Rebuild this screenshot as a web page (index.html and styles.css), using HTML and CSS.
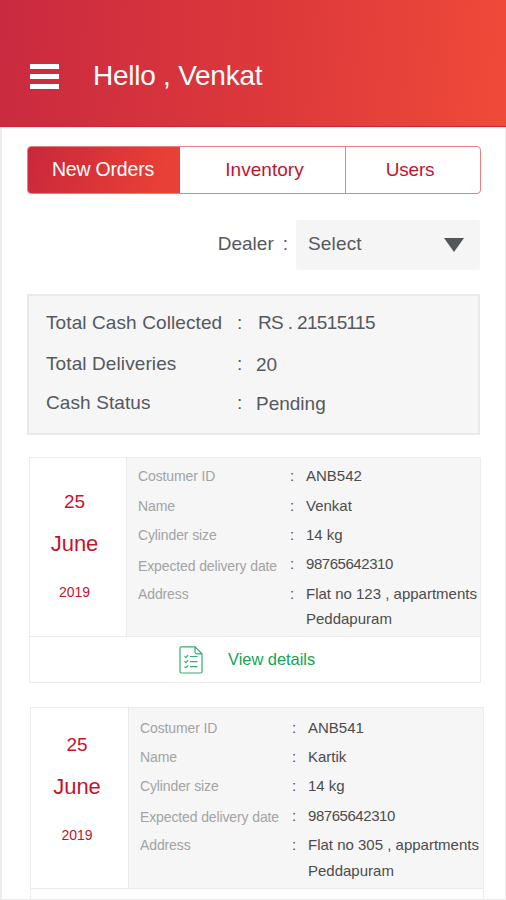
FILE: index.html
```html
<!DOCTYPE html>
<html lang="en">
<head>
<meta charset="utf-8">
<title>Orders</title>
<link rel="stylesheet" href="styles.css">
</head>
<body>
<div class="screen">
  <header class="header">
    <div class="burger"><span></span><span></span><span></span></div>
    <h1>Hello , Venkat</h1>
  </header>
  <main class="content">
    <nav class="tabs">
      <div class="tab active">New Orders</div>
      <div class="tab">Inventory</div>
      <div class="tab users">Users</div>
    </nav>
    <div class="dealer">
      <span class="dealer-label">Dealer</span><span class="dealer-colon">:</span>
      <div class="select"><span>Select</span><svg width="20" height="14" viewBox="0 0 20 14"><path d="M0 0H20L10 14Z" fill="#53565b"/></svg></div>
    </div>
    <section class="summary">
      <div class="sum-row"><span>Total Cash Collected</span><span>:</span><span class="amount">RS . 21515115</span></div>
      <div class="sum-row second"><span>Total Deliveries</span><span>:</span><span class="low">20</span></div>
      <div class="sum-row third"><span>Cash Status</span><span>:</span><span class="low">Pending</span></div>
    </section>
    <article class="card">
      <div class="card-top">
        <div class="date"><span class="day">25</span><span class="month">June</span><span class="year">2019</span></div>
        <dl class="info">
          <dt>Costumer ID</dt><dd class="colon">:</dd><dd>ANB542</dd>
          <dt>Name</dt><dd class="colon">:</dd><dd>Venkat</dd>
          <dt>Cylinder size</dt><dd class="colon">:</dd><dd>14 kg</dd>
          <dt class="expected">Expected delivery date</dt><dd class="colon">:</dd><dd class="digits">98765642310</dd>
          <dt>Address</dt><dd class="colon">:</dd><dd>Flat no 123 , appartments</dd>
          <dd class="city">Peddapuram</dd>
        </dl>
      </div>
      <div class="details">
        <svg width="24" height="28" viewBox="0 0 24 28" fill="none" stroke="#35ad72" stroke-width="1.2">
          <path d="M16 .8H2.5Q1 .8 1 2.3V25.5Q1 27 2.5 27H21.5Q23 27 23 25.5V7.8L16 .8V6.3Q16 7.8 17.5 7.8H23"/>
          <path d="M5.5 10.4l1.4 1.1 2.3-2.4M5.5 15.5l1.4 1.1 2.3-2.4M5.5 20.6l1.4 1.1 2.3-2.4M11 10.5h7.5M11 15.6h7.5M11 20.7h7.5"/>
        </svg>
        <span>View details</span>
      </div>
    </article>
    <article class="card next">
      <div class="card-top">
        <div class="date"><span class="day">25</span><span class="month">June</span><span class="year">2019</span></div>
        <dl class="info">
          <dt>Costumer ID</dt><dd class="colon">:</dd><dd>ANB541</dd>
          <dt>Name</dt><dd class="colon">:</dd><dd>Kartik</dd>
          <dt>Cylinder size</dt><dd class="colon">:</dd><dd>14 kg</dd>
          <dt class="expected">Expected delivery date</dt><dd class="colon">:</dd><dd class="digits">98765642310</dd>
          <dt>Address</dt><dd class="colon">:</dd><dd>Flat no 305 , appartments</dd>
          <dd class="city">Peddapuram</dd>
        </dl>
      </div>
      <div class="details"></div>
    </article>
  </main>
</div>
</body>
</html>
```
FILE: styles.css
```css
* { box-sizing: border-box; }
body { margin: 0; background: #fff; font-family: "Liberation Sans", Arial, sans-serif; color: #55585c; }
.screen { height: 900px; overflow: hidden; display: flex; flex-direction: column; }
.header {
  height: 127px; flex: none; display: flex; align-items: center; padding: 26px 0 0 30px;
  background: linear-gradient(95deg, #ca2a40 0%, #dc383b 52%, #f04a39 100%);
  border-bottom: 1px solid #cf2433;
}
.burger { width: 29px; height: 25px; display: flex; flex-direction: column; justify-content: space-between; }
.burger span { height: 5px; background: #fff; }
h1 { margin: 0 0 0 34px; font-size: 28px; font-weight: 400; letter-spacing: -.25px; line-height: 34px; color: #fff; }
.content {
  flex: 1; min-height: 0; overflow: hidden; padding: 18px 0 0 25px;
  border: solid #ececec; border-width: 1px 1px 1px 2px;
}
.tabs {
  width: 454px; height: 48px; display: flex;
  border: 1.5px solid #e98080; border-radius: 4px; overflow: hidden; font-size: 19px; color: #c3142f;
}
.tab { width: 165px; display: flex; align-items: center; justify-content: center; padding: 0 0 1px 4px; letter-spacing: .05px; }
.tab.active {
  width: 153px; margin: -1px 0 -1px -1px; padding: 0 1px 2px 0; font-size: 19.5px; letter-spacing: -.2px; color: #fff;
  background: linear-gradient(110deg, #c9273c, #e83f36 85%);
}
.tab.users { flex: 1; padding: 0 6px 1px 0; border-left: 1.5px solid #e98080; letter-spacing: -.2px; }
.dealer { width: 453px; height: 50px; margin-top: 26px; display: flex; justify-content: flex-end; align-items: center; font-size: 19px; }
.dealer span { position: relative; top: -1px; }
.dealer-colon { margin: 0 8px 0 9px; }
.select {
  width: 184px; height: 50px; padding: 0 16px 0 12px; display: flex; align-items: center; justify-content: space-between;
  background: #f5f5f6; border-radius: 3px; letter-spacing: .15px;
}
.summary { width: 453px; height: 141px; margin-top: 24px; padding: 15px 0 0 17px; background: #f6f6f6; border: 2px solid #e9e9e9; font-size: 19px; }
.sum-row { display: grid; grid-template-columns: 191px 19px 1fr; height: 24px; line-height: 24px; letter-spacing: .1px; }
.second { margin-top: 17px; }
.third { margin-top: 15px; }
.sum-row .amount { letter-spacing: -.65px; padding-left: 2px; }
.low { padding-top: 1px; letter-spacing: 0; }
.card { width: 452px; height: 226px; margin: 22px 0 0 2px; border: 1.5px solid #ececec; }
.card-top { height: 179px; display: flex; border-bottom: 1.5px solid #eaeaea; }
.date { width: 97px; display: flex; flex-direction: column; align-items: center; padding: 32px 7px 0 0; color: #c3142f; border-right: 1.5px solid #eaeaea; }
.day { font-size: 19px; line-height: 24px; }
.month { margin-top: 17px; font-size: 22px; line-height: 26px; }
.year { margin-top: 24px; font-size: 14px; line-height: 22px; }
.info {
  flex: 1; margin: 0; padding: 3.5px 0 0 11px; background: #f6f6f6; display: grid;
  grid-template-columns: 152px 16px 1fr; grid-template-rows: repeat(5, 29.4px) 22px; align-items: center; align-content: start;
  font-size: 15px; line-height: 22px; color: #4c4c4c; white-space: nowrap;
}
.info dt { font-size: 14px; letter-spacing: -.12px; color: #a3a3a3; }
.info dd { margin: 0; }
.info .expected { padding-top: 3px; }
.info .digits { letter-spacing: -.45px; }
.info .city { grid-column: 3; }
.details { height: 45px; display: flex; align-items: center; padding-left: 149px; gap: 25px; font-size: 16.5px; letter-spacing: -.05px; color: #14a455; }
.next { width: 454px; margin: 24px 0 0 3px; }
.next .card-top { height: 181px; }
.next .date { width: 98px; padding: 25px 5px 0 0; }
.next .info { padding-top: 5px; }
```
